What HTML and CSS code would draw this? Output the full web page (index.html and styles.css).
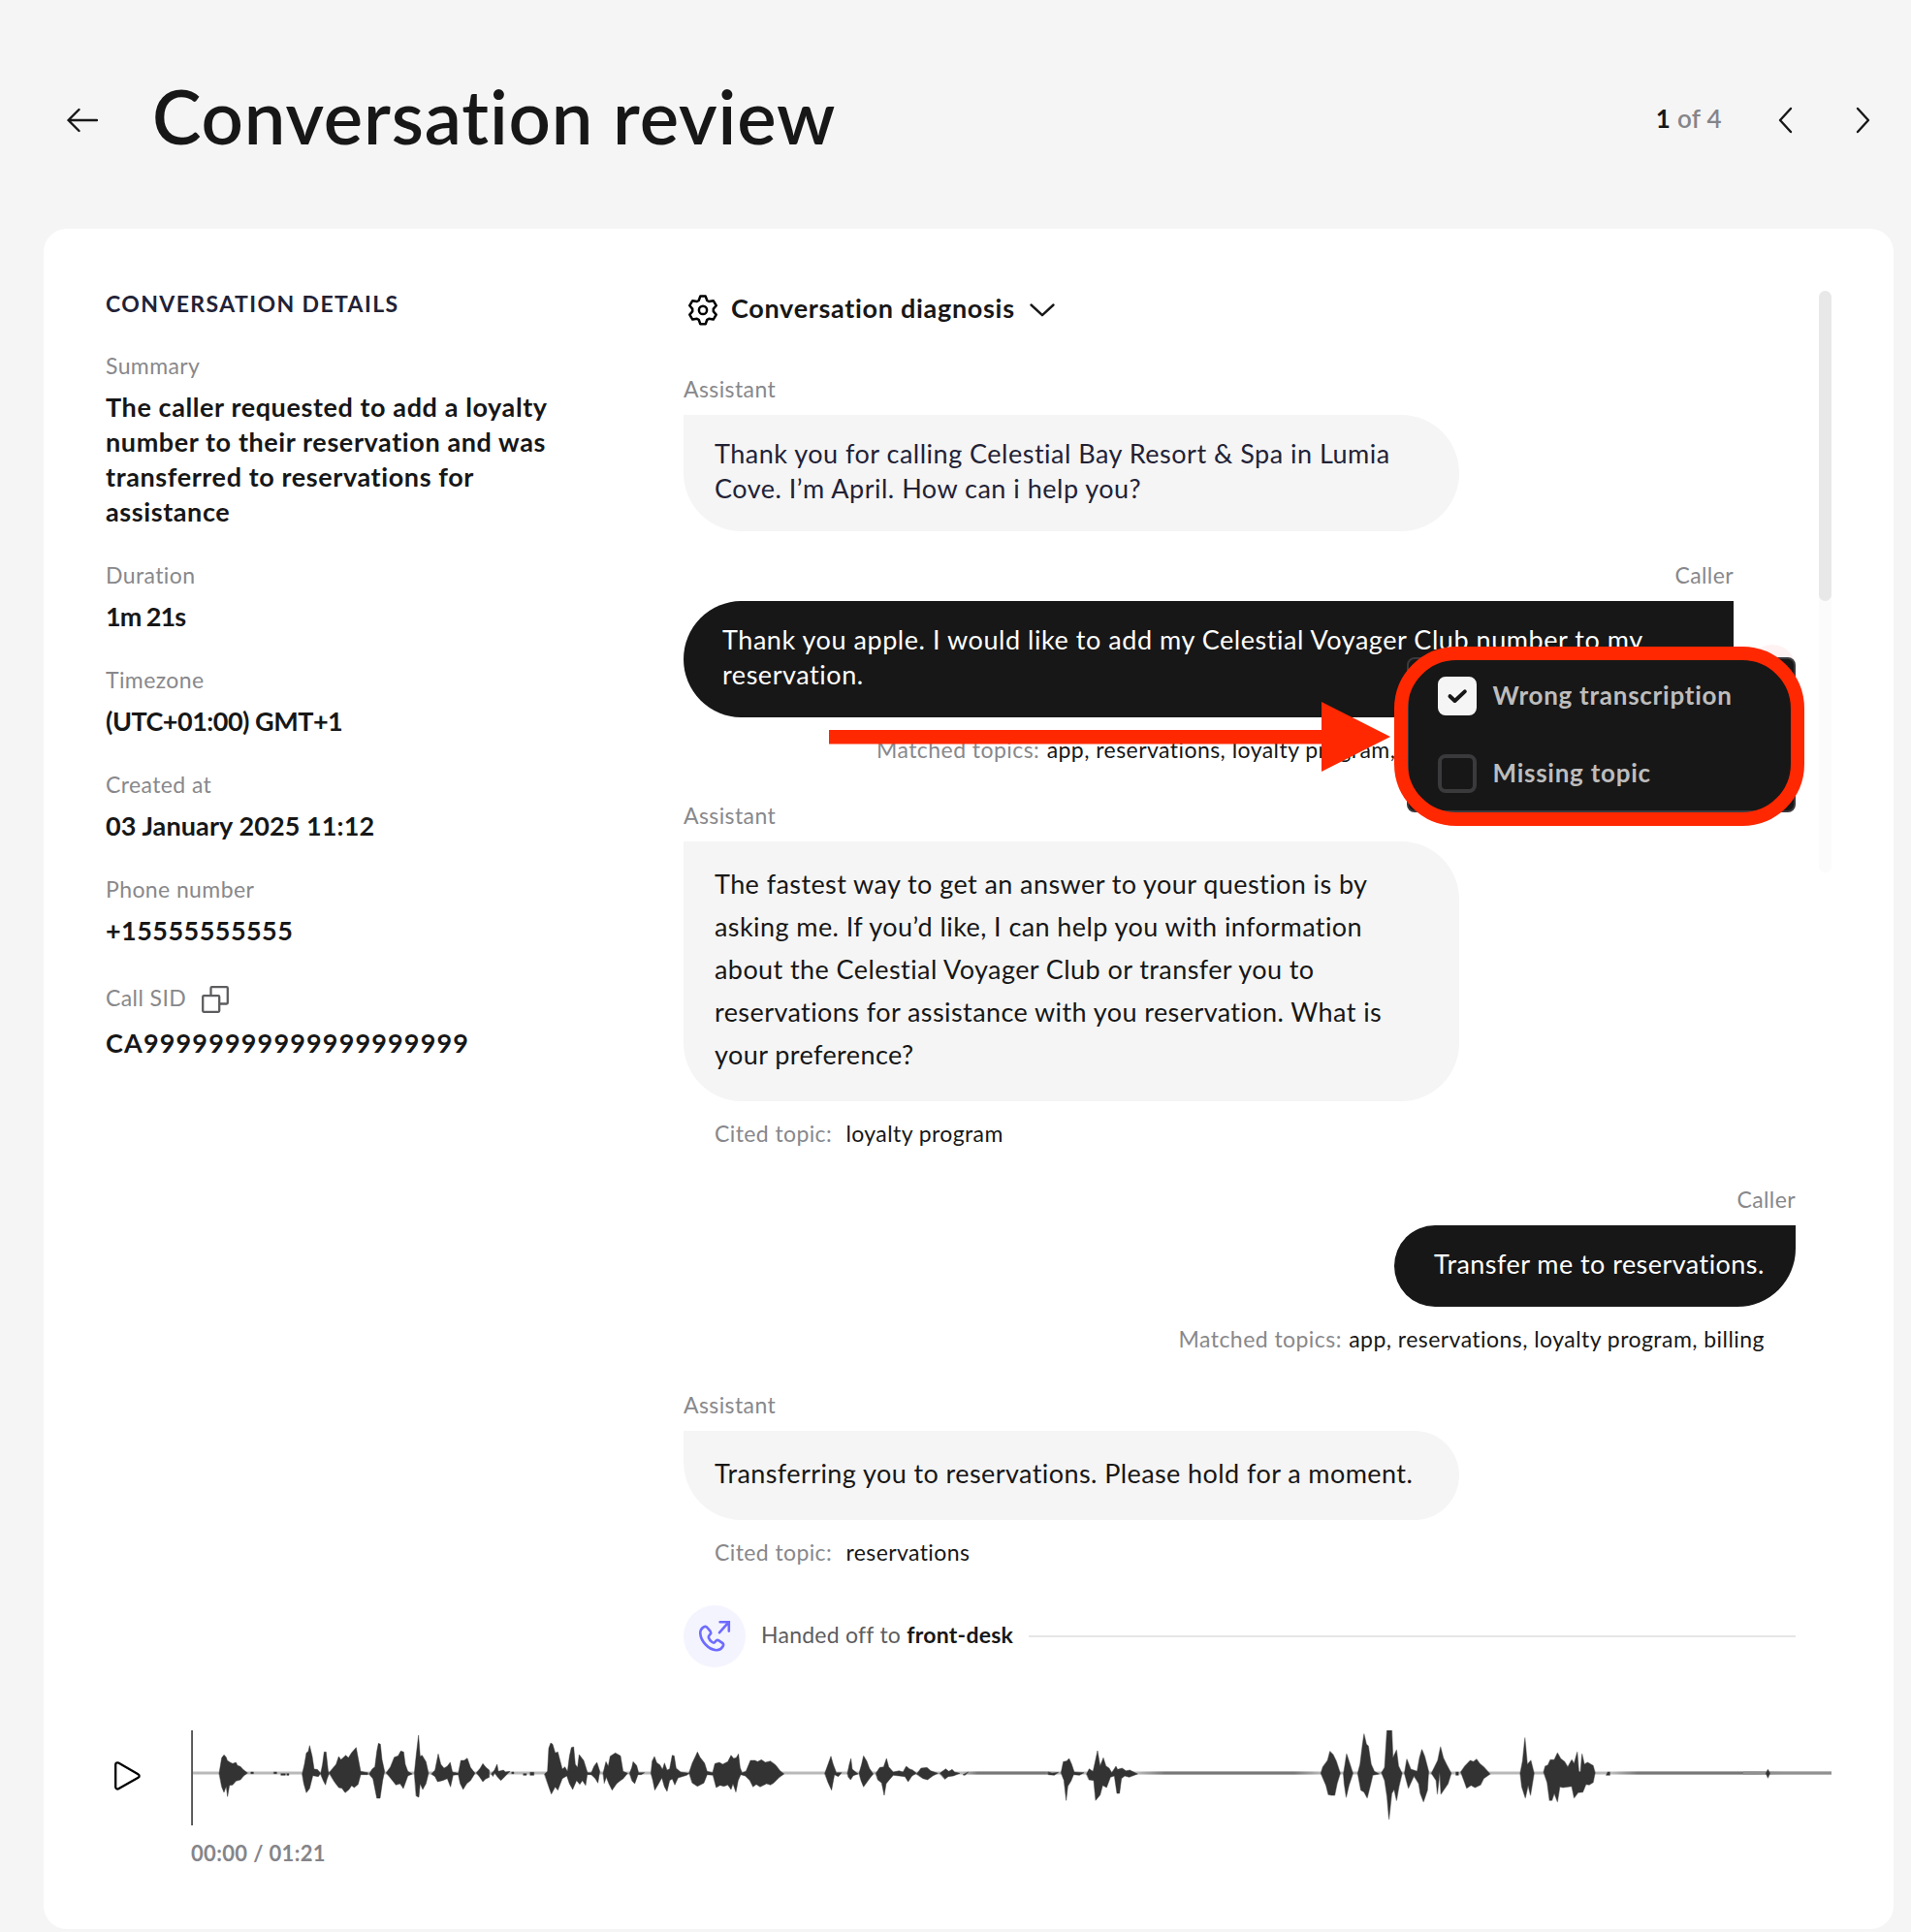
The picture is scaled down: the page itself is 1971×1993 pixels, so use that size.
FILE: index.html
```
<!DOCTYPE html>
<html lang="en">
<head>
<meta charset="utf-8">
<title>Conversation review</title>
<link rel="stylesheet" href="styles.css">
</head>
<body>
<header class="header">
  <svg class="back" width="32" height="26" viewBox="0 0 32 26"><path d="M31 13H1.500M12.500 2L1.500 13l11 11"/></svg>
  <h1 class="title">Conversation review</h1>
  <div class="pager">
    <span class="count"><b>1</b> of 4</span>
    <svg class="prev" width="16" height="28" viewBox="0 0 16 28"><path d="M14 2L3 14l11 12"/></svg>
    <svg class="next" width="16" height="28" viewBox="0 0 16 28"><path d="M2 2l11 12L2 26"/></svg>
  </div>
</header>

<main class="card">
  <div class="columns">
    <aside class="details">
      <h2 class="details-title">CONVERSATION DETAILS</h2>
      <dl class="list">
        <div class="item"><dt>Summary</dt><dd>The caller requested to add a loyalty<br>number to their reservation and was<br>transferred to reservations for<br>assistance</dd></div>
        <div class="item"><dt>Duration</dt><dd class="num-sm">1m 21s</dd></div>
        <div class="item"><dt>Timezone</dt><dd class="num-zone">(UTC+01:00) GMT+1</dd></div>
        <div class="item"><dt>Created at</dt><dd class="num-date">03 January 2025 11:12</dd></div>
        <div class="item"><dt>Phone number</dt><dd class="num-phone">+15555555555</dd></div>
        <div class="item sid"><dt><span>Call SID</span>
          <svg width="28" height="28" viewBox="0 0 28 28"><path d="M9.500 9V2.200a1 1 0 0 1 1-1h15.300a1 1 0 0 1 1 1v15.300a1 1 0 0 1-1 1H19"/><rect x="1.200" y="10.200" width="17" height="16.600" rx="1"/></svg>
        </dt><dd class="num-sid">CA99999999999999999999</dd></div>
      </dl>
    </aside>

    <section class="thread">
      <div class="diagnosis">
        <svg class="gear" width="30" height="32" viewBox="0 0 30 32"><path d="M12.300 1.600h5.400l1.600 4.400 1.800 1 4.600-.8 3 5-2.900 3.400v2.600l2.900 3.400-3 5-4.600-.8-1.800 1-1.600 4.400h-5.400l-1.600-4.400-1.800-1-4.600.8-3-5 2.900-3.400v-2.600l-2.900-3.400 3-5 4.600.8 1.800-1z"/><circle cx="15" cy="15.900" r="4.100"/></svg>
        <span>Conversation diagnosis</span>
        <svg class="down" width="28" height="16" viewBox="0 0 28 16"><path d="M2.500 2.500L14 13.200 25.500 2.500"/></svg>
      </div>

      <article class="message first">
        <p class="who">Assistant</p>
        <p class="bubble assistant ink">Thank you for calling Celestial Bay Resort &amp; Spa in Lumia<br>Cove. I’m April. How can i help you?</p>
      </article>

      <article class="message caller inset follow">
        <p class="who">Caller</p>
        <p class="bubble wide">Thank you apple. I would like to add my Celestial Voyager Club number to my<br>reservation.</p>
        <p class="meta start"><span>Matched topics:</span> app, reservations, loyalty program, billing</p>
        <div class="flag"></div>
        <div class="popup">
          <div class="option"><span class="box checked"><svg width="22" height="17" viewBox="0 0 22 17"><path d="M3.500 8.200l5 4.800L18.800 3.400"/></svg></span><span>Wrong transcription</span></div>
          <div class="option"><span class="box"></span><span>Missing topic</span></div>
        </div>
      </article>

      <article class="message">
        <p class="who">Assistant</p>
        <p class="bubble assistant loose">The fastest way to get an answer to your question is by<br>asking me. If you’d like, I can help you with information<br>about the Celestial Voyager Club or transfer you to<br>reservations for assistance with you reservation. What is<br>your preference?</p>
        <p class="meta cited"><span>Cited topic:</span> loyalty program</p>
      </article>

      <article class="message caller">
        <p class="who">Caller</p>
        <p class="bubble short">Transfer me to reservations.</p>
        <p class="meta end"><span>Matched topics:</span> app, reservations, loyalty program, billing</p>
      </article>

      <article class="message">
        <p class="who">Assistant</p>
        <p class="bubble assistant loose single">Transferring you to reservations. Please hold for a moment.</p>
        <p class="meta cited"><span>Cited topic:</span> reservations</p>
      </article>

      <div class="handoff">
        <span class="phone"><svg width="34" height="34" viewBox="0 0 34 34"><path d="M5.800 7.300C3.200 8.900 1.900 11 2.300 14.500c.7 7.500 8.500 16.300 16.200 16.700 3.200.2 5.600-1.300 7.300-4.200.6-1.200.4-2.300-.7-3.200l-3.700-2.500c-1-.7-2-.5-2.900.4l-1.500 1.500c-.7.600-1.600.4-2.500-.2-1.700-1.200-3-2.800-3.600-4.500-.3-.9-.2-1.500.4-2.200l1.200-1.500c.8-.9.9-1.900.2-2.900L9.500 8c-1-1.300-2.200-1.600-3.700-.7z"/><path d="M22 13.200L31.400 2.600M22.600 2.200h9.200v9.400"/></svg></span>
        <span class="handoff-text">Handed off to <b>front-desk</b></span>
        <span class="rule"></span>
      </div>
    </section>
    <div class="scroll"><div class="thumb"></div></div>
  </div>

  <div class="player">
    <svg class="play" width="30" height="32" viewBox="0 0 30 32"><path d="M2.200 4.300v23.300a2 2 0 0 0 3 1.700l20.300-11.500a2 2 0 0 0 0-3.600L5.200 2.600a2 2 0 0 0-3 1.700z"/></svg>
    <div class="track">
      <svg class="wave" width="1693" height="98" viewBox="-1 0 1693 98">
        <defs><linearGradient id="quiet"><stop offset="0" stop-color="#777" stop-opacity="0"/><stop offset=".15" stop-color="#777"/><stop offset=".85" stop-color="#777"/><stop offset="1" stop-color="#777" stop-opacity="0"/></linearGradient></defs>
        <rect x="1" y="42.500" width="1690" height="3" fill="#b9b9b9"/>
        <rect x="795" y="42.500" width="100" height="3" fill="url(#quiet)"/>
        <rect x="975" y="42.500" width="190" height="3" fill="url(#quiet)"/>
        <rect x="1465" y="42.500" width="175" height="3" fill="url(#quiet)"/>
        <rect x="1600" y="42.500" width="91" height="3" fill="#909090"/>
        <rect x="-.8" y="0" width="1.700" height="98" fill="#444"/>
        <g fill="#333" stroke="#333" stroke-opacity=".45" stroke-width="3">
          <g transform="translate(-118 -45) scale(.33333)">
            <path d="M438 268L446 220 453 211 460 218 463 228 472 234 480 238 490 234 495 244 504 247 512 256 526 267 514 276 504 288 490 292 480 304 470 305 464 340 460 308 453 327 446 310Z"/>
            <path d="M695 270L702 240 708 205 714 200 718 182 726 215 732 255 742 256 752 268 745 278 728 275 718 315 708 328 700 300ZM752 270L758 240 763 202 769 202 775 258 778 270 772 285 767 304 760 290Z"/>
            <path d="M778 266L800 240 808 216 815 226 830 212 838 220 848 204 862 188 868 220 876 262 898 266 898 272 876 272 868 302 856 312 848 306 840 318 828 328 818 314 808 312 795 295Z"/>
            <path d="M902 270L912 254 920 248 926 200 931 175 937 178 942 225 950 262 944 290 936 345 926 345 920 315 914 285Z"/>
            <path d="M955 266L968 248 980 218 992 214 1000 199 1009 202 1014 240 1022 262 1036 270 1022 276 1008 315 998 300 985 304 970 285ZM1042 268L1048 210 1055 150 1060 215 1066 212 1078 232 1086 268 1078 300 1068 318 1060 300 1056 342 1048 338Z"/>
            <path d="M1095 270L1106 258 1116 208 1124 240 1134 252 1144 246 1153 234 1160 264 1178 268 1186 228 1196 228 1206 221 1216 250 1230 268 1216 290 1204 300 1193 318 1184 300 1178 272 1162 274 1154 310 1144 284 1130 290 1114 294 1106 278Z"/>
            <path d="M1234 266L1246 252 1254 238 1264 250 1274 258 1274 280 1262 286 1254 294 1246 282ZM1280 270L1290 258 1298 240 1302 262 1318 258 1324 264 1338 262 1322 278 1310 290 1300 280 1290 266 1286 277Z"/>
            <path d="M537 264h7v5h-7zM608 264h8v5h-8zM630 269h13v5h-13zM648 269h6v5h-6zM1344 264h6v5h-6zM1380 269h9v5h-9zM1401 265h11v9h-11z"/>
          </g>
          <g transform="translate(362 -45) scale(.33333)">
            <path d="M5 270L14 262 18 190 24 174 30 178 38 205 46 202 52 225 60 255 68 248 76 262 82 215 88 188 95 186 100 240 107 250 112 210 126 228 138 266 132 305 122 290 114 302 104 290 92 318 82 300 74 276 60 284 46 320 38 310 26 332 18 310Z"/>
            <path d="M138 266h12v6h-12zM148 270L158 246 167 234 176 262 170 298 162 284ZM186 268L195 232 202 246 208 215 224 205 240 214 248 262 262 268 248 285 240 290 228 300 214 320 204 300 196 280 190 298ZM268 268L275 250 279 232 290 244 296 266 314 266 304 272 294 272 284 300 276 292Z"/>
            <path d="M334 268L338 230 345 216 352 235 362 242 370 256 376 236 384 258 392 254 400 212 406 214 412 252 426 264 452 268 445 274 418 282 408 304 400 285 392 290 384 324 376 310 368 282 358 300 346 320 340 290Z"/>
            <path d="M452 266L462 236 472 215 478 202 486 218 500 236 508 262 525 266 532 238 546 234 556 240 572 232 582 212 590 222 598 220 605 208 610 250 616 266 628 262 642 228 656 228 664 232 676 226 688 234 704 230 720 242 734 260 746 270 732 280 714 298 704 304 692 300 672 310 660 302 650 310 640 290 626 276 612 272 604 290 597 326 588 300 582 318 572 304 560 308 548 305 536 312 526 274 508 272 498 298 478 308 462 298Z"/>
            <path d="M872 268L884 235 891 215 898 240 908 266 924 266 914 278 902 272 893 320 882 296ZM942 268L948 240 953 222 957 255 975 270 960 275 952 288 945 280ZM978 268L986 240 992 214 1002 230 1010 252 1022 270 1010 285 992 310 984 290Z"/>
            <path d="M1030 268L1042 250 1054 248 1063 222 1070 248 1084 264 1102 260 1114 264 1124 246 1134 254 1144 258 1156 268 1142 276 1130 294 1120 278 1084 274 1070 290 1062 300 1056 336 1048 298 1036 288Z"/>
            <path d="M1156 270L1170 252 1188 250 1200 260 1222 268 1206 276 1190 288 1176 284ZM1228 268L1246 254 1256 262 1266 256 1274 264 1290 268 1270 276 1254 278 1244 286ZM1300 272L1316 264 1306 274Z"/>
          </g>
          <g transform="translate(842 -45) scale(.33333)">
            <path d="M124 264L135 268 155 265 142 274 124 272ZM163 266L170 232 180 230 188 222 196 240 204 264 234 266 220 274 202 272 194 292 184 308 179 352 172 290Z"/>
            <path d="M242 270L250 254 262 262 268 235 276 198 284 245 294 220 302 245 312 252 320 266 333 246 338 256 352 252 364 260 376 258 400 270 374 280 360 276 350 284 344 330 336 330 328 276 316 280 304 312 292 305 284 335 270 352 264 290 250 288Z"/>
          </g>
          <g transform="translate(1132 -45) scale(.4088 .33333)">
            <path d="M79 268L84 248 96 228 102 200 110 210 118 230 128 268 120 300 114 336 106 336 98 334 92 305ZM136 270L140 240 144 208 150 230 160 268 150 305 143 342 138 300ZM172 268L178 240 184 180 188 146 194 178 199 184 206 240 214 262 226 270 210 274 204 305 196 344 188 326 180 320Z"/>
            <path d="M232 266L240 250 246 132 258 132 261 220 270 196 275 245 284 268 276 310 270 352 264 318 258 330 251 410 246 340 240 290ZM290 268L296 224 306 255 322 262 328 220 334 194 341 215 351 262 348 320 338 356 330 330 326 300 314 276 300 314Z"/>
            <path d="M358 268L366 248 374 228 381 186 388 220 396 240 408 268 400 300 382 332 379 265 373 332 370 290ZM420 264h6v10h-6zM432 264L442 246 456 228 464 232 472 224 480 238 490 248 506 270 490 284 482 304 468 312 458 305 447 314 440 290Z"/>
            <path d="M582 268L588 230 594 158 600 240 609 228 617 268 608 336 602 305 595 344 586 310ZM641 264L645 246 652 242 658 226 668 226 676 205 684 222 694 232 702 248 712 226 718 238 726 202 730 262 734 264 738 208 744 240 752 234 766 244 771 266 766 296 756 304 748 302 740 326 728 328 718 344 712 308 690 312 682 310 676 356 668 330 662 352 656 352 650 296Z"/>
            <path d="M799 274L803 264 808 264 808 274ZM1202 268L1207 256 1212 268 1207 282Z"/>
          </g>
        </g>
      </svg>
      <div class="time">00:00 / 01:21</div>
    </div>
  </div>
</main>

<svg class="arrow" width="580" height="72" viewBox="0 0 580 72"><path d="M0 29h508V0l71 36-71 36V43.500H0z"/></svg>
<div class="highlight"></div>
</body>
</html>
```
FILE: styles.css
```
* { box-sizing: border-box; }
body {
  margin: 0;
  width: 1971px;
  height: 1993px;
  position: relative;
  overflow: hidden;
  background: #f5f5f5;
  color: #171717;
  font-family: Lato, "Open Sans", sans-serif;
  font-variant-ligatures: none;
  white-space: nowrap;
}
h1, h2, p, dl, dt, dd { margin: 0; font-weight: 400; }
svg { display: block; flex: none; fill: none; stroke-linecap: round; stroke-linejoin: round; }

.header { height: 236px; padding: 12px 41px 0 69px; display: flex; align-items: center; }
.back, .prev, .next, .down { stroke: #171717; stroke-width: 2.4; }
.title { margin-left: 56px; padding-bottom: 9px; font-size: 76px; line-height: 88px; font-weight: 600; letter-spacing: .85px; }
.pager { margin-left: auto; display: flex; align-items: center; }
.count { padding-bottom: 4px; font-size: 26px; line-height: 36px; font-weight: 600; letter-spacing: .3px; color: #858589; }
.count b { color: #171717; font-weight: 700; }
.prev { margin-left: 57px; }
.next { margin-left: 65px; }

.card { width: 1908px; height: 1754px; margin-left: 45px; padding: 64px; border-radius: 24px; background: #fff; }
.columns { display: grid; grid-template-columns: 596px 1147px 13px; column-gap: 0; }
.scroll { margin-left: 24px; width: 13px; height: 600px; border-radius: 7px; background: #fbfbfb; }
.thumb { height: 320px; border-radius: 7px; background: #e8e8e8; }

.details-title { font-size: 23px; line-height: 27px; font-weight: 700; letter-spacing: 1.4px; color: #222236; }
.list { margin-top: 35.5px; display: flex; flex-direction: column; gap: 33px; }
dt, .who, .meta { font-size: 23px; line-height: 28px; letter-spacing: .4px; color: #88888b; }
.who, .meta { margin-bottom: 2px; }
dd { margin-top: 11px; font-size: 27px; line-height: 36px; font-weight: 700; letter-spacing: .6px; }
.num-sm { letter-spacing: -1px; }
.num-zone { letter-spacing: -.5px; }
.num-date { letter-spacing: .1px; }
.num-phone { letter-spacing: .45px; }
.num-sid { letter-spacing: 1.15px; }
.sid dt { height: 36px; display: flex; align-items: center; gap: 15.5px; }
.sid svg { margin-top: 5px; stroke: #5d5d60; stroke-width: 2.3; }

.diagnosis { height: 40px; padding-left: 5px; display: flex; align-items: center; font-size: 27px; font-weight: 700; }
.diagnosis span { margin-left: 14px; padding-bottom: 4px; letter-spacing: .7px; line-height: 36px; }
.gear { stroke: #000; stroke-width: 2.5; }
.down { margin-left: 14px; }

.message { margin-top: 38px; display: flex; flex-direction: column; align-items: flex-start; position: relative; }
.message.first { margin-top: 46.5px; }
.message.follow { margin-top: 30.5px; }
.caller { align-items: flex-end; }
.inset { margin-right: 64px; }
.bubble { margin-top: 11.5px; font-size: 27px; line-height: 36px; letter-spacing: .5px; }
.assistant { width: 800px; padding: 22px 32px 26px; border-radius: 0 60px 60px 60px; background: #f5f5f5; }
.ink { color: #222236; }
.loose { line-height: 44px; padding-bottom: 26px; letter-spacing: .42px; }
.single { border-radius: 0 46px 46px 60px; }
.caller .bubble { background: #171717; color: #fff; }
.wide { width: 100%; padding: 22px 40px 26px; border-radius: 60px 0 60px 60px; letter-spacing: .55px; }
.short { width: 414px; padding: 22px 34px 26px 41px; border-radius: 42px 0 60px 42px; letter-spacing: .45px; }
.meta { margin-top: 18.5px; color: #171717; }
.meta span { margin-right: 1px; color: #88888b; }
.cited { padding-left: 32px; }
.cited span { margin-right: 8px; }
.start { align-self: flex-start; padding-left: 199px; }
.start, .end { letter-spacing: .45px; }
.end { padding-right: 32px; }

.flag { position: absolute; right: -64px; top: 86px; width: 48px; height: 48px; border-radius: 50%; background: #fff2f2; }
.popup { position: absolute; right: -64px; top: 99.5px; width: 401px; height: 160px; padding: 18px 30px; border: 2px solid #3a3a3d; border-radius: 8px; background: #171717; display: flex; flex-direction: column; gap: 40px; z-index: 1; }
.option { display: flex; align-items: center; gap: 16.5px; font-size: 26px; line-height: 36px; font-weight: 700; color: #bdbdbd; letter-spacing: .75px; }
.option > span:last-child { padding-bottom: 3px; }
.box { width: 40px; height: 40px; flex: none; border: 4px solid #3a3a3c; border-radius: 8px; display: flex; align-items: center; justify-content: center; }
.checked { border-color: #f5f5f5; background: #f5f5f5; }
.box svg { stroke: #171717; stroke-width: 4; }

.handoff { margin-top: 39.5px; height: 64px; display: flex; align-items: center; }
.phone { width: 64px; height: 64px; border-radius: 50%; background: #f4f4ff; display: flex; align-items: center; justify-content: center; }
.phone svg { stroke: #6e6bff; stroke-width: 2.6; stroke-linejoin: miter; }
.handoff-text { margin-left: 16px; padding-bottom: 5px; font-size: 23px; line-height: 30px; letter-spacing: .25px; color: #5d5d60; }
.handoff-text b { color: #171717; font-weight: 700; }
.rule { flex: 1; margin-left: 16px; height: 2px; background: #e6e6e6; }

.player { margin-top: 65px; padding-left: 8px; display: flex; }
.play { margin-top: 31px; stroke: #000; stroke-width: 2.3; }
.track { margin-left: 50px; }
.time { margin-top: 13.500px; font-size: 22px; line-height: 30px; font-weight: 700; letter-spacing: .35px; color: #858589; }

.arrow { position: absolute; left: 855px; top: 724px; fill: #ff2800; z-index: 2; }
.highlight { position: absolute; left: 1438px; top: 667px; width: 423px; height: 185px; border: 14px solid #ff2800; border-radius: 64px; z-index: 2; }
```
